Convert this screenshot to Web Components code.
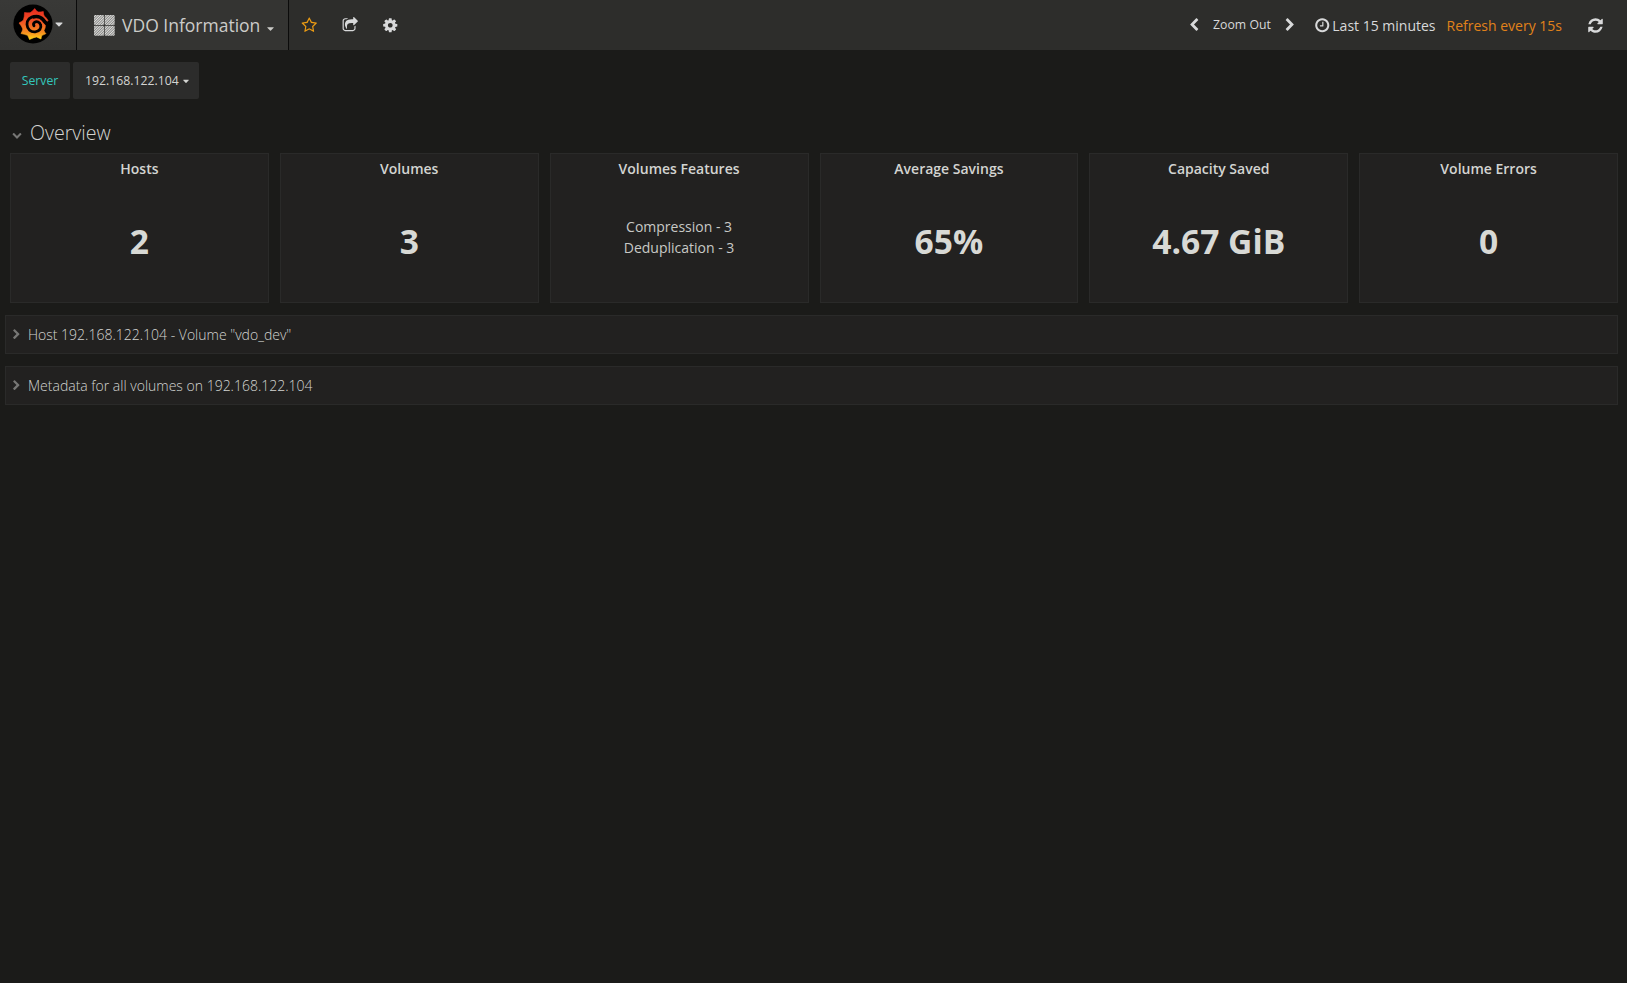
<!DOCTYPE html>
<html lang="en">
<head>
<meta charset="utf-8">
<title>VDO Information</title>
<style>
html,body{margin:0;height:100%;background:#1b1b19;overflow:hidden}
body{font-family:"Open Sans",sans-serif;font-size:14px;color:#d3d4d1}
</style>
</head>
<body>
<vdo-dashboard></vdo-dashboard>
<script>
const ICONS={
star:'M1201 1004l306-297-422-62-189-382-189 382-422 62 306 297-73 421 378-199 377 199zm527-357q0 22-26 48l-363 354 86 500q1 7 1 20 0 50-41 50-19 0-40-12l-449-236-449 236q-22 12-40 12-21 0-31.5-14.5t-10.5-35.5q0-6 2-20l86-500-364-354q-25-27-25-48 0-37 56-46l502-73 225-455q19-41 49-41t49 41l225 455 502 73q56 9 56 46z',
share:'M1472 989v259q0 119-84.5 203.5t-203.5 84.5h-832q-119 0-203.5-84.5t-84.5-203.5v-832q0-119 84.5-203.5t203.5-84.5h255q13 0 22.5 9.5t9.5 22.5q0 27-26 32-77 26-133 60-10 4-16 4h-112q-66 0-113 47t-47 113v832q0 66 47 113t113 47h832q66 0 113-47t47-113v-214q0-19 18-29 28-13 54-37 16-16 35-8 21 9 21 29zm237-496l-384 384q-18 19-45 19-12 0-25-5-39-17-39-59v-192h-160q-323 0-438 131-119 137-74 473 3 23-20 34-8 2-12 2-16 0-26-13-10-14-21-31t-39.5-68.5-49.5-99.5-38.5-114-17.5-122q0-49 3.5-91t14-90 28-88 47-81.5 68.5-74 94.5-61.5 124.5-48.5 159.5-30.5 196.5-11h160v-192q0-42 39-59 13-5 25-5 26 0 45 19l384 384q19 19 19 45t-19 45z',
cog:'M1152 896q0-106-75-181t-181-75-181 75-75 181 75 181 181 75 181-75 75-181zm512-109v222q0 12-8 23t-20 13l-185 28q-19 54-39 91 35 50 107 138 10 12 10 25t-9 23q-27 37-99 108t-94 71q-12 0-26-9l-138-108q-44 23-91 38-16 136-29 186-7 28-36 28h-222q-14 0-24.5-8.5t-11.5-21.5l-28-184q-49-16-90-37l-141 107q-10 9-25 9-14 0-25-11-126-114-165-168-7-10-7-23 0-12 8-23 15-21 51-66.5t54-70.5q-27-50-41-99l-183-27q-13-2-21-12.5t-8-23.5v-222q0-12 8-23t19-13l186-28q14-46 39-92-40-57-107-138-10-12-10-24 0-10 9-23 26-36 98.5-107.5t94.5-71.5q13 0 26 10l138 107q44-23 91-38 16-136 29-186 7-28 36-28h222q14 0 24.5 8.5t11.5 21.5l28 184q49 16 90 37l142-107q9-9 24-9 13 0 25 10 129 119 165 170 7 8 7 22 0 12-8 23-15 21-51 66.5t-54 70.5q26 50 41 98l183 28q13 2 21 12.5t8 23.5z',
refresh:'M1639 1056q0 5-1 7-64 268-268 434.5t-478 166.5q-146 0-282.5-55t-243.5-157l-129 129q-19 19-45 19t-45-19-19-45v-448q0-26 19-45t45-19h448q26 0 45 19t19 45-19 45l-137 137q71 66 161 102t187 36q134 0 250-65t186-179q11-17 53-117 8-23 30-23h192q13 0 22.5 9.5t9.5 22.5zm25-800v448q0 26-19 45t-45 19h-448q-26 0-45-19t-19-45 19-45l138-138q-148-137-349-137-134 0-250 65t-186 179q-11 17-53 117-8 23-30 23h-199q-13 0-22.5-9.5t-9.5-22.5v-7q65-268 270-434.5t480-166.5q146 0 284 55.5t245 156.5l130-129q19-19 45-19t45 19 19 45z',
clock:'M1024 544v448q0 14-9 23t-23 9h-320q-14 0-23-9t-9-23v-64q0-14 9-23t23-9h224v-352q0-14 9-23t23-9h64q14 0 23 9t9 23zm416 352q0-148-73-273t-198-198-273-73-273 73-198 198-73 273 73 273 198 198 273 73 273-73 198-198 73-273zm224 0q0 209-103 385.5t-279.5 279.5-385.5 103-385.5-103-279.5-279.5-103-385.5 103-385.5 279.5-279.5 385.5-103 385.5 103 279.5 279.5 103 385.5z',
left:'M1427 301l-531 531 531 531q19 19 19 45t-19 45l-166 166q-19 19-45 19t-45-19l-742-742q-19-19-19-45t19-45l742-742q19-19 45-19t45 19l166 166q19 19 19 45t-19 45z',
right:'M1363 877l-742 742q-19 19-45 19t-45-19l-166-166q-19-19-19-45t19-45l531-531-531-531q-19-19-19-45t19-45l166-166q19-19 45-19t45 19l742 742q19 19 19 45t-19 45z',
down:'M1683 808l-742 741q-19 19-45 19t-45-19l-742-741q-19-19-19-45.500t19-45.500l166-165q19-19 45-19t45 19l531 531 531-531q19-19 45-19t45 19l166 165q19 19 19 45.500t-19 45.500z',
caret:'M320 640h1152q26 0 45 19t19 45-19 45l-576 576q-19 19-45 19t-45-19l-576-576q-19-19-19-45t19-45 45-19z'
};
const define=(name,html)=>customElements.define(name,class extends HTMLElement{
  constructor(){super();this.attachShadow({mode:'open'}).innerHTML=html;}
});
customElements.define('fa-icon',class extends HTMLElement{
  connectedCallback(){
    const s=this.getAttribute('size')||16;
    const r=this.shadowRoot||this.attachShadow({mode:'open'});
    r.innerHTML=`<style>:host{display:block;flex:none;width:${s}px;height:${s}px}svg{display:block}</style>
    <svg width="${s}" height="${s}" viewBox="0 0 1792 1792" fill="currentColor"><path d="${ICONS[this.getAttribute('name')]}"/></svg>`;
  }
});
define('brand-logo',`<style>:host{display:block;flex:none;width:40px;height:40px}svg{display:block}</style>
<svg width="40" height="40" viewBox="0 0 40 40"><defs><linearGradient id="g" x1="0" y1="4" x2="0" y2="36" gradientUnits="userSpaceOnUse"><stop offset="0" stop-color="#e8271f"/><stop offset=".4" stop-color="#ee4f24"/><stop offset=".75" stop-color="#f58a20"/><stop offset="1" stop-color="#ffda18"/></linearGradient></defs>
<circle cx="20" cy="20" r="19.600" fill="#000"/>
<path d="M21.700 4.500Q23.500 7.500 25.500 8Q28 8 30.300 7.500Q30.300 10.500 31.300 12Q33.500 13.800 35 16.500Q33 18 32.500 20.500Q32.500 24 31 26.500Q31.500 28.500 33 29.500Q31 30.800 29 31.300Q28.200 33 28 35Q25.500 33.800 23.500 33Q20.500 33.500 16.500 35.500Q15.500 33 14.500 31.300Q11.500 30.300 8 29.500Q9.500 27 9.800 25Q8.800 22 6 19Q9 17.500 10.500 16Q11.500 12.500 11.500 8.500Q14.500 9 17 8.800Q19.500 7.500 21.700 4.500Z" fill="url(#g)" stroke="url(#g)" stroke-width=".6" stroke-linejoin="round"/>
<path d="M36 21C33 20 32 18 30 15.500C27.500 12.800 24 12 21 12.800" fill="none" stroke="#000" stroke-width="3.600" stroke-linecap="round"/>
<path d="M22 12.500C17 12.500 14 16 14 20.500C14.200 25.500 18 28.300 22.200 27.900C26.500 27.400 28.700 24 27.600 20.800C26.800 18 23.800 17 21.800 18.200C20.600 19 20.300 20.600 21 21.800" fill="none" stroke="#000" stroke-width="2.800" stroke-linecap="round"/></svg>`);
define('nav-bar',`<style>
:host{display:flex;height:50px;background:#2d2d2b;color:#d8d9da;box-sizing:border-box;align-items:stretch}
.brand,.title{display:flex;box-sizing:border-box;border-right:1px solid #0b0b0b;background:linear-gradient(#393937,#343432)}
.brand{width:77px;padding:4px 0 0 13px;gap:1px}.brand fa-icon{margin-top:15px}
.title{width:212px;background:#343432;align-items:center;padding-left:17px;font-size:17.500px;color:#ccccc9}
.title .name{margin-left:7px;line-height:50px;height:50px;white-space:nowrap}
.title fa-icon{margin:6px 0 0 6px}
.actions{display:flex;align-items:center;gap:24px;padding-left:12px;flex:1}
.star{color:#eb9b13}
.time{display:flex;align-items:center;white-space:nowrap}
.zoom{font-size:12.250px;margin:0 12px 0 12px;position:relative;top:-1px}
.range{font-size:14px;margin-left:2px}.refresh{font-size:14px;color:#e0821a;margin-left:11px}
</style>
<div class="brand"><brand-logo></brand-logo><fa-icon name="caret" size="10"></fa-icon></div>
<div class="title"><svg width="21" height="21" viewBox="0 0 21 21"><defs><pattern id="p" width="1.800" height="1.800" patternUnits="userSpaceOnUse" patternTransform="rotate(45)"><rect width="1.800" height="1.800" fill="#dededc"/><rect width=".8" height="1.800" fill="#7c7c7a"/></pattern></defs><g fill="url(#p)"><rect width="10" height="10" rx="1"/><rect x="10.700" width="10" height="10" rx="1"/><rect y="10.700" width="10" height="10" rx="1"/><rect x="10.700" y="10.700" width="10" height="10" rx="1"/></g></svg><span class="name">VDO Information</span><fa-icon name="caret" size="9"></fa-icon></div>
<div class="actions"><fa-icon class="star" name="star" size="16.500"></fa-icon><fa-icon name="share" size="16.500"></fa-icon><fa-icon name="cog" size="16.500"></fa-icon></div>
<div class="time"><fa-icon name="left" size="14"></fa-icon><span class="zoom">Zoom Out</span><fa-icon name="right" size="14"></fa-icon><fa-icon name="clock" size="16.500" style="margin-left:17px"></fa-icon><span class="range">Last 15 minutes</span><span class="refresh">Refresh every 15s</span><fa-icon name="refresh" size="17" style="margin:0 23px 0 25px"></fa-icon></div>`);
define('template-variable',`<style>
:host{display:flex;gap:3px;font-size:12.250px;height:37px}
div{display:flex;align-items:center;background:#2c2c2b;border-radius:2px;box-sizing:border-box;white-space:nowrap}
.label{width:60px;justify-content:center;color:#33c7bb}.value{width:126px;padding-left:12px;gap:3px}
</style><div class="label"><slot name="label"></slot></div><div class="value"><slot></slot><fa-icon name="caret" size="8"></fa-icon></div>`);
define('row-heading',`<style>
:host{display:flex;align-items:center;height:30px;font-size:19.600px;font-weight:300;padding-left:2px}
fa-icon{color:#777775;margin:5px 8px 0 0}
</style><fa-icon name="down" size="10"></fa-icon><slot></slot>`);
define('stat-panel',`<style>
:host{display:flex;flex-direction:column;box-sizing:border-box;height:150px;background:#222120;border:1px solid #2a2a29;text-align:center}
.t{font-weight:600;font-size:14px;line-height:29px;height:29px}
.v{flex:1;display:flex;flex-direction:column;align-items:center;justify-content:center;padding-bottom:4px;font-size:33.600px;font-weight:700;line-height:40px;color:#d8d9d5}
::slotted(p){margin:0;font-size:14px;line-height:21px;font-weight:400;position:relative;top:-4px;color:#c8c9c6}
</style><div class="t"><slot name="title"></slot></div><div class="v"><slot></slot></div>`);
define('collapsed-row',`<style>
:host{display:flex;align-items:center;box-sizing:border-box;height:39px;background:#222120;border:1px solid #2a2a29;font-size:14px;font-weight:300;padding-left:5px}
fa-icon{color:#777775;margin-right:6px}
</style><fa-icon name="right" size="11"></fa-icon><slot></slot>`);
define('vdo-dashboard',`<style>
:host{display:block}
template-variable{margin:12px 0 0 10px}
row-heading{margin:18px 0 0 10px}
.grid{display:grid;grid-template-columns:repeat(6,1fr);gap:11px;margin:6px 9px 12px 10px}
collapsed-row{margin:0 9px 12px 5px}
</style>
<nav-bar></nav-bar>
<template-variable><span slot="label">Server</span>192.168.122.104</template-variable>
<row-heading>Overview</row-heading>
<div class="grid">
<stat-panel><span slot="title">Hosts</span>2</stat-panel>
<stat-panel><span slot="title">Volumes</span>3</stat-panel>
<stat-panel><span slot="title">Volumes Features</span><p>Compression - 3</p><p>Deduplication - 3</p></stat-panel>
<stat-panel><span slot="title">Average Savings</span>65%</stat-panel>
<stat-panel><span slot="title">Capacity Saved</span>4.67 GiB</stat-panel>
<stat-panel><span slot="title">Volume Errors</span>0</stat-panel>
</div>
<collapsed-row>Host 192.168.122.104 - Volume "vdo_dev"</collapsed-row>
<collapsed-row>Metadata for all volumes on 192.168.122.104</collapsed-row>`);
</script>
</body>
</html>
